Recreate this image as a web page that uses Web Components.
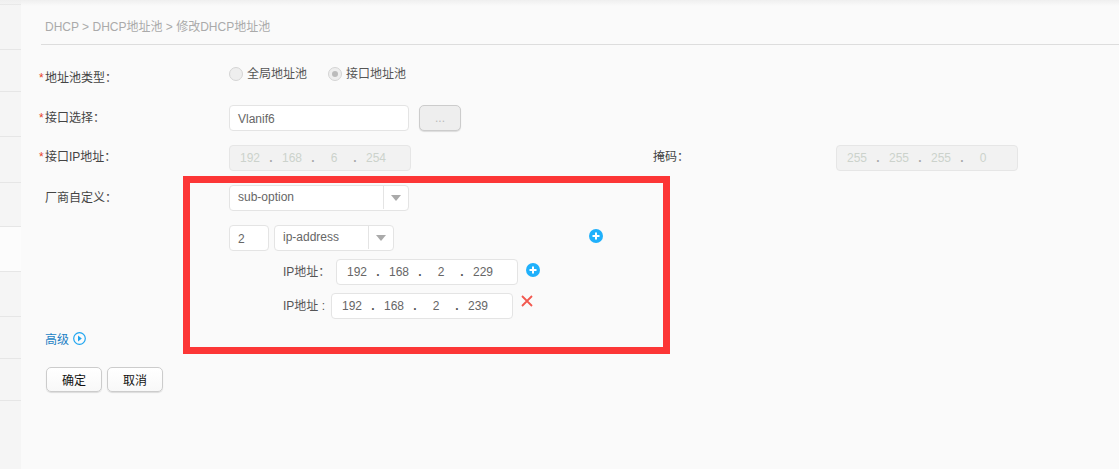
<!DOCTYPE html>
<html lang="zh">
<head>
<meta charset="utf-8">
<title>修改DHCP地址池</title>
<style>
  html, body { margin: 0; height: 100%; background: #fafafa; overflow: hidden; }
  body { font: 12px "Liberation Sans", "Noto Sans CJK SC", sans-serif; color: #444; }
</style>
</head>
<body>
<dhcp-shell>
  <dhcp-sidebar slot="side"></dhcp-sidebar>
  <dhcp-crumb>DHCP &gt; DHCP地址池 &gt; 修改DHCP地址池</dhcp-crumb>
  <dhcp-form>
    <dhcp-row label="地址池类型" required align="radio">
      <dhcp-radio>全局地址池</dhcp-radio>
      <dhcp-radio checked>接口地址池</dhcp-radio>
    </dhcp-row>
    <dhcp-row label="接口选择" required>
      <dhcp-input value="Vlanif6" width="180"></dhcp-input>
      <dhcp-button kind="more">...</dhcp-button>
    </dhcp-row>
    <dhcp-row label="接口IP地址" required lift>
      <dhcp-ip value="192.168.6.254" disabled></dhcp-ip>
      <dhcp-row-end label="掩码"><dhcp-ip value="255.255.255.0" disabled></dhcp-ip></dhcp-row-end>
    </dhcp-row>
    <dhcp-row label="厂商自定义">
      <dhcp-stack>
        <dhcp-select value="sub-option" width="180"></dhcp-select>
        <dhcp-line>
          <dhcp-input value="2" width="40"></dhcp-input>
          <dhcp-select value="ip-address" width="120"></dhcp-select>
          <dhcp-icon name="plus" style="margin-left:190px;margin-top:-4px"></dhcp-icon>
        </dhcp-line>
        <dhcp-line indent="54" tight>
          <dhcp-caption width="53">IP地址：</dhcp-caption>
          <dhcp-ip value="192.168.2.229"></dhcp-ip>
          <dhcp-icon name="plus" style="margin-left:8px;margin-top:-5px"></dhcp-icon>
        </dhcp-line>
        <dhcp-line indent="54" tight>
          <dhcp-caption width="48">IP地址 :</dhcp-caption>
          <dhcp-ip value="192.168.2.239"></dhcp-ip>
          <dhcp-icon name="close" style="margin-left:8px;margin-top:-11px"></dhcp-icon>
        </dhcp-line>
      </dhcp-stack>
    </dhcp-row>
    <dhcp-advanced>高级</dhcp-advanced>
    <dhcp-actions>
      <dhcp-button>确定</dhcp-button>
      <dhcp-button>取消</dhcp-button>
    </dhcp-actions>
  </dhcp-form>
  <dhcp-mark slot="overlay"></dhcp-mark>
</dhcp-shell>

<script>
// 小工具：用一段 html 建 shadow root
class Base extends HTMLElement {
  connectedCallback() {
    if (this.shadowRoot) return;
    this.attachShadow({ mode: 'open' });
    this.shadowRoot.innerHTML = this.html();
  }
}

class DhcpShell extends Base {
  html() {
    return `<style>
      :host { display: flex; height: 469px; position: relative; }
      .main { flex: 1; min-width: 0; padding-top: 0; }
      .shade { position: absolute; left: 0; right: 0; top: 0; height: 6px;
        background: linear-gradient(#efefef, rgba(250,250,250,0)); }
    </style>
    <slot name="side"></slot>
    <div class="main"><slot></slot></div>
    <div class="shade"></div>
    <slot name="overlay"></slot>`;
  }
}

class DhcpSidebar extends Base {
  html() {
    // 左侧菜单被截掉了，只剩分隔线
    const rows = [5, 45, 42, 45, 46, 44, 45, 45, 42, 42];
    const cells = rows.map((h, i) =>
      `<div class="${i === 6 ? 'on' : ''}" style="height:${h - 1}px"></div>`).join('');
    return `<style>
      :host { display: block; width: 21px; flex: none; background: #f5f5f5; }
      div { border-bottom: 1px solid #e6e6e6; }
      .on { background: #fcfcfc; }
    </style>${cells}`;
  }
}

class DhcpCrumb extends Base {
  html() {
    return `<style>
      :host { display: block; margin-left: 20px; height: 45px; box-sizing: border-box;
        padding: 19px 0 0 4px; border-bottom: 1px solid #ddd; color: #aaa; font-size: 12px; line-height: 16px; }
    </style><slot></slot>`;
  }
}

class DhcpForm extends Base {
  html() {
    return `<style>
      :host { display: flex; flex-direction: column; gap: 14px; padding: 15px 0 0 18px; }
    </style><slot></slot>`;
  }
}

class DhcpRow extends Base {
  html() {
    const star = this.hasAttribute('required') ? '<i>*</i>' : '';
    const radio = this.getAttribute('align') === 'radio';
    const lift = this.hasAttribute('lift') ? -1 : 0;
    return `<style>
      :host { display: flex; align-items: flex-start; min-height: 26px; ${radio ? 'margin-top:1px;' : ''} }
      .label { width: 190px; flex: none; box-sizing: border-box; position: relative; padding-left: 6px;
        line-height: 26px; color: #444; margin-top: ${lift}px; ${radio ? 'padding-top:4px;' : ''} }
      i { position: absolute; left: 0; top: ${radio ? 4 : 0}px; color: #e8431f; font-style: normal; }
      .body { display: flex; align-items: flex-start; gap: 10px; flex: 1; ${radio ? 'gap:21px;' : ''} }
    </style>
    <div class="label">${star}${this.getAttribute('label')}：</div>
    <div class="body"><slot></slot></div>`;
  }
}

// 同一行右边的“掩码”
class DhcpRowEnd extends Base {
  html() {
    return `<style>
      :host { display: flex; margin-left: 232px; }
      .label { width: 183px; line-height: 26px; color: #444; margin-top: -1px; }
    </style><div class="label">${this.getAttribute('label')}：</div><slot></slot>`;
  }
}

class DhcpStack extends Base {
  html() {
    return `<style>
      :host { display: flex; flex-direction: column; }
      ::slotted(:nth-child(2)) { margin-top: 14px; }
      ::slotted(:nth-child(3)), ::slotted(:nth-child(4)) { margin-top: 8px; }
    </style><slot></slot>`;
  }
}

class DhcpLine extends Base {
  html() {
    return `<style>
      :host { display: flex; align-items: center; gap: ${this.hasAttribute('tight') ? 0 : 5}px;
        padding-left: ${this.getAttribute('indent') || 0}px; }
    </style><slot></slot>`;
  }
}

class DhcpCaption extends Base {
  html() {
    return `<style>
      :host { display: block; width: ${this.getAttribute('width')}px; color: #555; white-space: nowrap; margin-top: -3px; }
    </style><slot></slot>`;
  }
}

class DhcpRadio extends Base {
  html() {
    const on = this.hasAttribute('checked');
    return `<style>
      :host { display: flex; align-items: center; gap: 4px; height: 26px; margin-top: -1px; color: #555; }
      b { width: 12px; height: 12px; border: 1px solid #d4d4d4; border-radius: 50%; background: #eee;
        display: flex; align-items: center; justify-content: center; margin-top: 2px; }
      b::after { content: ""; width: 6px; height: 6px; border-radius: 50%; background: ${on ? '#bbb' : 'transparent'}; }
      span { margin-top: -1px; }
    </style><b></b><span><slot></slot></span>`;
  }
}

class DhcpInput extends Base {
  html() {
    return `<style>
      :host { display: block; width: ${this.getAttribute('width')}px; height: 26px; box-sizing: border-box;
        border: 1px solid #e4e4e4; border-radius: 4px; background: #fff; padding-left: 8px;
        line-height: 26px; color: #666; }
    </style>${this.getAttribute('value')}`;
  }
}

class DhcpSelect extends Base {
  html() {
    return `<style>
      :host { display: flex; width: ${this.getAttribute('width')}px; height: 26px; box-sizing: border-box;
        border: 1px solid #e4e4e4; border-radius: 4px; background: #fff; line-height: 22px; color: #666; }
      .v { flex: 1; padding-left: 8px; }
      .a { width: 24px; margin: 0 0 1px; border-left: 1px solid #e4e4e4; display: flex; align-items: center; justify-content: center; }
      .a::after { content: ""; border: 5px solid transparent; border-top: 6px solid #aaa; border-bottom: 0; }
    </style><div class="v">${this.getAttribute('value')}</div><div class="a"></div>`;
  }
}

class DhcpIp extends Base {
  html() {
    const off = this.hasAttribute('disabled');
    const parts = this.getAttribute('value').split('.');
    const cells = parts.map((p, i) =>
      `<span class="n">${p}</span>${i < 3 ? '<span class="d">.</span>' : ''}`).join('');
    return `<style>
      :host { display: flex; width: 182px; height: 26px; box-sizing: border-box; flex: none; padding-left: 1px;
        border: 1px solid ${off ? '#e6e6e6' : '#e4e4e4'}; border-radius: 4px;
        background: ${off ? '#f2f2f2' : '#fff'}; color: ${off ? '#ccd2cc' : '#666'}; line-height: 24px; }
      .n { width: 38px; text-align: center; }
      .d { width: 4px; text-align: center; font-weight: bold; color: ${off ? '#aaa' : '#555'}; }
    </style>${cells}`;
  }
}

class DhcpButton extends Base {
  html() {
    const more = this.getAttribute('kind') === 'more';
    return `<style>
      :host { display: flex; align-items: center; justify-content: center; box-sizing: border-box;
        width: ${more ? 42 : 56}px; height: ${more ? 26 : 25}px; border: 1px solid #ccc; border-radius: 5px;
        background: ${more ? '#eee' : 'linear-gradient(#fff, #f8f8f8)'}; color: ${more ? '#bbb' : '#111'};
        box-shadow: 0 1px 1px rgba(0,0,0,.12); }
    </style><slot></slot>`;
  }
}

class DhcpIcon extends Base {
  html() {
    const plus = `<svg width="14" height="14" viewBox="0 0 14 14"><circle cx="7" cy="7" r="7" fill="#1fb0fb"/><path d="M7 3.5v7M3.5 7h7" stroke="#fff" stroke-width="2"/></svg>`;
    const close = `<svg width="12" height="12" viewBox="0 0 12 12"><path d="M1 1l10 10M11 1L1 11" stroke="#f2584f" stroke-width="1.8"/></svg>`;
    return `<style>:host { display: block; line-height: 0; flex: none; }</style>${this.getAttribute('name') === 'plus' ? plus : close}`;
  }
}

class DhcpAdvanced extends Base {
  html() {
    return `<style>
      :host { display: flex; align-items: center; gap: 4px; height: 16px; margin: -3px 0 0 6px; color: #1a7fc4; }
      svg { flex: none; }
    </style><slot></slot>
    <svg width="13" height="13" viewBox="0 0 13 13"><circle cx="6.5" cy="6.5" r="5.8" fill="none" stroke="#1fa5f0" stroke-width="1.2"/><path d="M5 3.5l3.8 3-3.8 3z" fill="#1fa5f0"/></svg>`;
  }
}

class DhcpActions extends Base {
  html() {
    return `<style>:host { display: flex; gap: 5px; margin: 7px 0 0 7px; }</style><slot></slot>`;
  }
}

// 截图上的红色标注框
class DhcpMark extends Base {
  html() {
    return `<style>
      :host { position: absolute; left: 183px; top: 176px; width: 487px; height: 178px;
        box-sizing: border-box; border: 7px solid #fc3636; pointer-events: none; }
    </style>`;
  }
}

const tags = {
  'dhcp-shell': DhcpShell, 'dhcp-sidebar': DhcpSidebar, 'dhcp-crumb': DhcpCrumb, 'dhcp-form': DhcpForm,
  'dhcp-row': DhcpRow, 'dhcp-row-end': DhcpRowEnd, 'dhcp-stack': DhcpStack, 'dhcp-line': DhcpLine,
  'dhcp-caption': DhcpCaption, 'dhcp-radio': DhcpRadio, 'dhcp-input': DhcpInput, 'dhcp-select': DhcpSelect,
  'dhcp-ip': DhcpIp, 'dhcp-button': DhcpButton, 'dhcp-icon': DhcpIcon, 'dhcp-advanced': DhcpAdvanced,
  'dhcp-actions': DhcpActions, 'dhcp-mark': DhcpMark
};
Object.keys(tags).forEach(t => customElements.define(t, tags[t]));
</script>
</body>
</html>
